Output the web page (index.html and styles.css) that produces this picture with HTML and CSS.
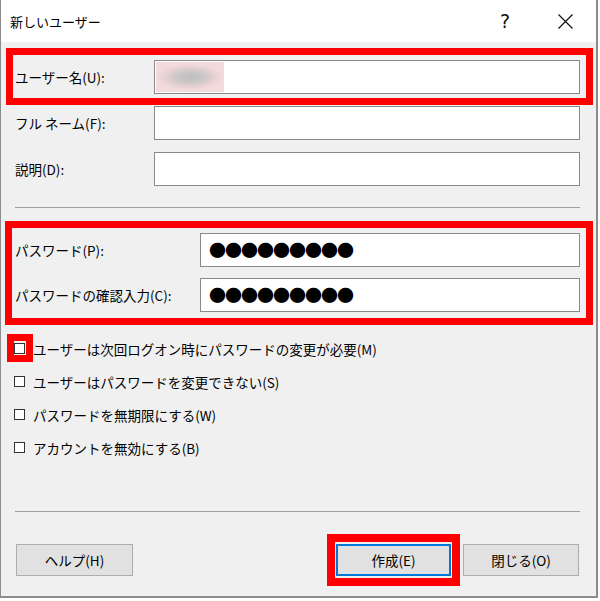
FILE: index.html
```html
<!DOCTYPE html>
<html lang="ja">
<head>
<meta charset="utf-8">
<title>新しいユーザー</title>
<link rel="stylesheet" href="styles.css">
</head>
<body>
<div class="window">
  <div class="titlebar">
    <span class="title">新しいユーザー</span>
    <span class="help">?</span>
    <span class="close">
      <svg width="15" height="15" viewBox="0 0 15 15"><path d="M0.5 0.5 L14.5 14.5 M14.5 0.5 L0.5 14.5" stroke="#111" stroke-width="1.2" fill="none"/></svg>
    </span>
  </div>
  <div class="content">
    <div class="group1">
      <div class="row"><span class="label">ユーザー名(U):</span><div class="input"><div class="blur"></div></div></div>
      <div class="row"><span class="label">フル ネーム(F):</span><div class="input"></div></div>
      <div class="row"><span class="label">説明(D):</span><div class="input"></div></div>
    </div>
    <div class="sep first"></div>
    <div class="group2">
      <div class="row"><span class="label wide">パスワード(P):</span><div class="input pw">●●●●●●●●●</div></div>
      <div class="row"><span class="label wide">パスワードの確認入力(C):</span><div class="input pw">●●●●●●●●●</div></div>
    </div>
    <div class="checks">
      <div class="check"><span class="box"></span><span>ユーザーは次回ログオン時にパスワードの変更が必要(M)</span></div>
      <div class="check"><span class="box"></span><span>ユーザーはパスワードを変更できない(S)</span></div>
      <div class="check"><span class="box"></span><span>パスワードを無期限にする(W)</span></div>
      <div class="check"><span class="box"></span><span>アカウントを無効にする(B)</span></div>
    </div>
    <div class="sep second"></div>
    <div class="buttons">
      <div class="btn help-btn">ヘルプ(H)</div>
      <div class="btn create-btn">作成(E)</div>
      <div class="btn close-btn">閉じる(O)</div>
    </div>
  </div>
  <div class="mark mark-user"></div>
  <div class="mark mark-pw"></div>
  <div class="mark mark-check"></div>
  <div class="mark mark-create"></div>
</div>
</body>
</html>
```
FILE: styles.css
```css
* { box-sizing: border-box; }
html, body { margin: 0; padding: 0; background: #fff; }
body {
  font-family: "Noto Sans CJK JP", "Noto Sans", sans-serif;
  color: #000;
  font-size: 13.5px;
}
.window {
  position: relative;
  width: 598px;
  height: 598px;
  background: #f0f0f0;
  border-left: 1px solid #8c8c8c;
  border-right: 2px solid #8c8c8c;
  border-bottom: 2px solid #8c8c8c;
}
.titlebar {
  height: 42px;
  background: #fff;
  display: flex;
  align-items: center;
  padding-left: 9px;
}
.title { flex: 1; font-size: 13px; }
.help {
  width: 20px;
  text-align: center;
  font-family: "DejaVu Sans", sans-serif;
  font-size: 19px;
  color: #111;
  margin-right: 43px;
}
.close { width: 15px; height: 15px; margin-right: 23px; display: flex; }
.content {
  display: flex;
  flex-direction: column;
  padding: 0 16px 0 14px;
}
.group1 { display: flex; flex-direction: column; gap: 12px; margin-top: 18px; }
.group2 { display: flex; flex-direction: column; gap: 11px; margin-top: 25px; }
.row { display: flex; align-items: center; height: 34px; }
.label { width: 139px; flex: none; }
.label.wide { width: 185px; }
.input {
  flex: 1;
  height: 34px;
  background: #fff;
  border: 1px solid #8a8a8a;
}
.blur {
  width: 68px;
  height: 30px;
  margin: 1px 0 0 1px;
  background: radial-gradient(ellipse 50% 45% at 50% 50%, #bdbdbd 0%, #cfc8c9 45%, #ecd3d5 80%, #f3dadc 100%);
}
.pw {
  font-size: 17px;
  letter-spacing: -1px;
  line-height: 32px;
  padding-left: 8px;
}
.sep { height: 1px; background: #a0a0a0; }
.sep.first { margin-top: 21px; }
.sep.second { margin-top: 47px; }
.checks { display: flex; flex-direction: column; margin-top: 20px; }
.check { display: flex; align-items: center; height: 33px; margin-left: -1px; }
.box {
  width: 11px;
  height: 11px;
  border: 1px solid #333;
  background: #fff;
  margin-right: 8px;
  flex: none;
}
.buttons { display: flex; margin-top: 32px; padding: 0 1px; }
.btn {
  height: 32px;
  background: #e1e1e1;
  border: 1px solid #adadad;
  display: flex;
  align-items: center;
  justify-content: center;
}
.help-btn { width: 117px; }
.create-btn {
  width: 115px;
  margin-left: auto;
  margin-right: 12px;
  border-color: #0078d7;
  box-shadow: inset 0 0 0 1px #0078d7;
}
.close-btn { width: 116px; }
.mark { position: absolute; border: 7px solid #f00; }
.mark-user { left: 5px; top: 48px; width: 587px; height: 57px; }
.mark-pw { left: 4px; top: 221px; width: 588px; height: 104px; }
.mark-check { left: 6px; top: 334px; width: 26px; height: 28px; }
.mark-create { left: 326px; top: 534px; width: 133px; height: 52px; border-width: 8px; }
```
